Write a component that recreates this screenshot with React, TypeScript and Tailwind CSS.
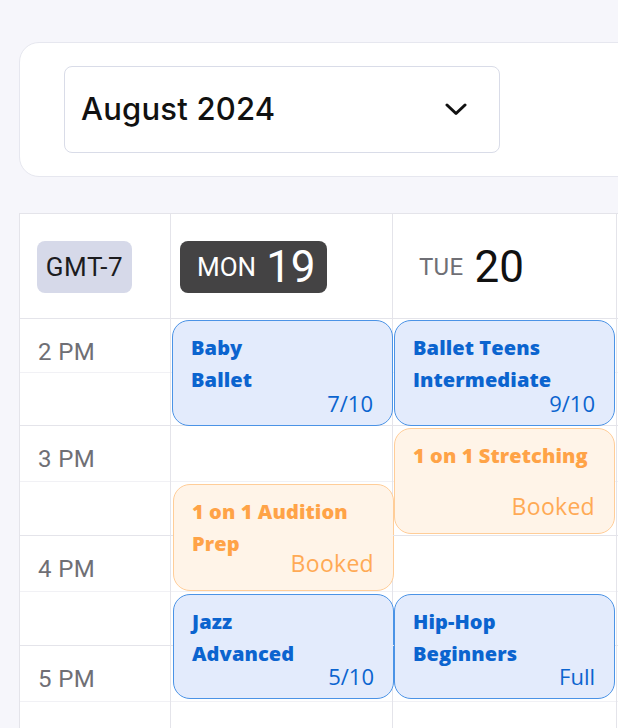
import React from "react";

type Ev = {
  title: string[];
  count: string;
  kind: "blue" | "orange";
  top: number;
  height: number;
  left: number;
};

const mon: Ev[] = [
  { title: ["Baby", "Ballet"], count: "7/10", kind: "blue", top: 1, height: 106, left: 1 },
  { title: ["1 on 1 Audition", "Prep"], count: "Booked", kind: "orange", top: 165, height: 107, left: 2 },
  { title: ["Jazz", "Advanced"], count: "5/10", kind: "blue", top: 275, height: 105, left: 2 },
];

const tue: Ev[] = [
  { title: ["Ballet Teens", "Intermediate"], count: "9/10", kind: "blue", top: 1, height: 106, left: 1 },
  { title: ["1 on 1 Stretching"], count: "Booked", kind: "orange", top: 109, height: 106, left: 1 },
  { title: ["Hip-Hop", "Beginners"], count: "Full", kind: "blue", top: 275, height: 105, left: 1 },
];

const hours = ["2 PM", "3 PM", "4 PM", "5 PM"];

function HourCell({ i, label }: { i: number; label?: string }) {
  const first = i === 0;
  return (
    <div
      className={
        "flex flex-col border-b border-[#e4e4ea] " + (first ? "h-[107px]" : "h-[110px]")
      }
    >
      <div
        className={
          "border-b border-[#f1f1f5] " + (first ? "h-[54px]" : "h-[56px]")
        }
      >
        {label && (
          <div className="pl-[18px] pt-[21px] text-[24px] leading-[24px] tracking-[0.4px] text-[#6f6f75] font-['Roboto',sans-serif]">
            {label}
          </div>
        )}
      </div>
      <div className="flex-1" />
    </div>
  );
}

function Event({ ev }: { ev: Ev }) {
  const blue = ev.kind === "blue";
  return (
    <div
      className={
        "absolute w-[221px] rounded-[17px] border pl-[18px] pt-[11px] " +
        (blue
          ? "bg-[#e3ebfc] border-[#4b93e6] text-[#0b64cf]"
          : "bg-[#fff4e8] border-[#ffcd98] text-[#ffa347]")
      }
      style={{ top: ev.top, height: ev.height, left: ev.left }}
    >
      <div className="font-['Open_Sans',sans-serif] font-extrabold text-[20px] leading-[32px] tracking-[0.1px]">
        {ev.title.map((t) => (
          <div key={t}>{t}</div>
        ))}
      </div>
      <div
        className={
          "absolute right-[19px] font-['Open_Sans',sans-serif] leading-[22px] " +
          (blue
            ? "bottom-[11px] text-[22px]"
            : "bottom-[16px] text-[23px] tracking-[0.3px] text-[#ffaa55]")
        }
      >
        {ev.count}
      </div>
    </div>
  );
}

function DayColumn({ events, width }: { events: Ev[]; width: string }) {
  return (
    <div className={"relative shrink-0 border-r border-[#e4e4ea] " + width}>
      {hours.map((h, i) => (
        <HourCell key={h} i={i} />
      ))}
      <HourCell i={4} />
      {events.map((ev) => (
        <Event key={ev.title.join(" ")} ev={ev} />
      ))}
    </div>
  );
}

export default function App() {
  return (
    <div className="w-[618px] h-[728px] overflow-hidden bg-[#f6f6fb] font-['Roboto',sans-serif]">
      <div className="w-[900px] pl-[19px] pt-[42px]">
        {/* top card */}
        <div className="rounded-[20px] border border-[#e6e7ef] bg-white pl-[44px] pt-[23px] pb-[23px]">
          <div className="flex h-[87px] w-[436px] items-center justify-between rounded-[8px] border border-[#d9dce8] bg-white pl-[16px] pr-[32px]">
            <span className="font-['Inter',sans-serif] text-[31px] font-medium text-[#111] tracking-[0.2px]">
              August 2024
            </span>
            <svg width="22" height="13" viewBox="0 0 22 13" fill="none">
              <path
                d="M2 2 L11 10.5 L20 2"
                stroke="#111"
                strokeWidth="3"
                strokeLinecap="round"
                strokeLinejoin="round"
              />
            </svg>
          </div>
        </div>

        {/* calendar grid */}
        <div className="mt-[36px] border-l border-t border-[#e4e4ea] bg-white">
          {/* header */}
          <div className="flex h-[105px] border-b border-[#e4e4ea]">
            <div className="flex w-[151px] shrink-0 items-center border-r border-[#e4e4ea] pl-[17px] pt-[2px]">
              <div className="flex h-[52px] w-[95px] items-center justify-center rounded-[8px] bg-[#d6d9e9] text-[26px] tracking-[0.6px] text-[#1c1c1f]">
                GMT-7
              </div>
            </div>
            <div className="flex w-[222px] shrink-0 items-center border-r border-[#e4e4ea] pl-[9px] pt-[2px]">
              <div className="flex h-[52px] items-center gap-[10px] rounded-[8px] bg-[#444344] pl-[17px] pr-[11px] text-white">
                <span className="text-[26px] leading-none">MON</span>
                <span className="text-[44px] leading-none">19</span>
              </div>
            </div>
            <div className="flex w-[224px] shrink-0 items-center border-r border-[#e4e4ea] pl-[9px] pt-[2px]">
              <div className="flex h-[52px] items-center gap-[11px] rounded-[8px] pl-[17px] pr-[16px]">
                <span className="text-[24px] leading-none tracking-[0.3px] text-[#6f6f75]">TUE</span>
                <span className="text-[44px] leading-none text-[#111]">20</span>
              </div>
            </div>
            <div className="w-[224px] shrink-0 border-r border-[#e4e4ea]" />
          </div>

          {/* body */}
          <div className="flex">
            <div className="w-[151px] shrink-0 border-r border-[#e4e4ea]">
              {hours.map((h, i) => (
                <HourCell key={h} i={i} label={h} />
              ))}
              <HourCell i={4} />
            </div>
            <DayColumn events={mon} width="w-[222px]" />
            <DayColumn events={tue} width="w-[224px]" />
            <DayColumn events={[]} width="w-[224px]" />
          </div>
        </div>
      </div>
    </div>
  );
}
